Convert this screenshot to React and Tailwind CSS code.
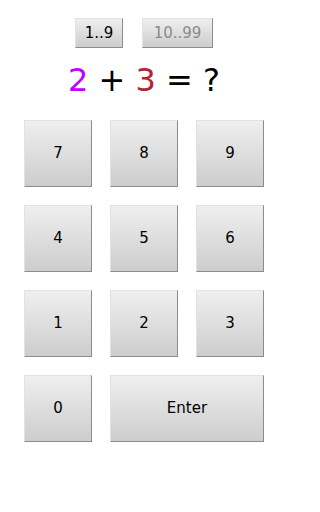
const keyClass =
  "flex items-center justify-center h-[67px] border border-t-[#e2e2e2] border-l-[#e2e2e2] border-r-[#8c8c8c] border-b-[#8c8c8c] bg-gradient-to-b from-[#efefef] to-[#cdcdcd] text-[15px] text-black";

export default function App() {
  const rows = [["7", "8", "9"], ["4", "5", "6"], ["1", "2", "3"]];

  return (
    <div
      className="w-[288px] h-[512px] bg-white flex flex-col items-center"
      style={{ fontFamily: '"DejaVu Sans", Verdana, sans-serif' }}
    >
      <div className="flex gap-[19px] mt-[18px]">
        <button className="w-[48px] h-[30px] flex items-center justify-center border border-t-[#e2e2e2] border-l-[#e2e2e2] border-r-[#8c8c8c] border-b-[#8c8c8c] bg-gradient-to-b from-[#efefef] to-[#cdcdcd] text-[15px] text-black">
          1..9
        </button>
        <button className="w-[71px] h-[30px] flex items-center justify-center border border-t-[#e2e2e2] border-l-[#e2e2e2] border-r-[#8c8c8c] border-b-[#8c8c8c] bg-gradient-to-b from-[#efefef] to-[#cdcdcd] text-[15px] text-[#8a8a8a]">
          10..99
        </button>
      </div>

      <div className="mt-[10px] h-[44px] flex items-center text-[32px] leading-none text-black whitespace-pre">
        <span className="text-[#c000ff]">2</span>
        <span> + </span>
        <span className="text-[#b82035]">3</span>
        <span> = ?</span>
      </div>

      <div className="mt-[18px] grid grid-cols-[68px_68px_68px] gap-x-[18px] gap-y-[18px]">
        {rows.flat().map((n) => (
          <button key={n} className={keyClass}>
            {n}
          </button>
        ))}
        <button className={keyClass}>0</button>
        <button className={keyClass + " col-span-2"}>Enter</button>
      </div>
    </div>
  );
}
